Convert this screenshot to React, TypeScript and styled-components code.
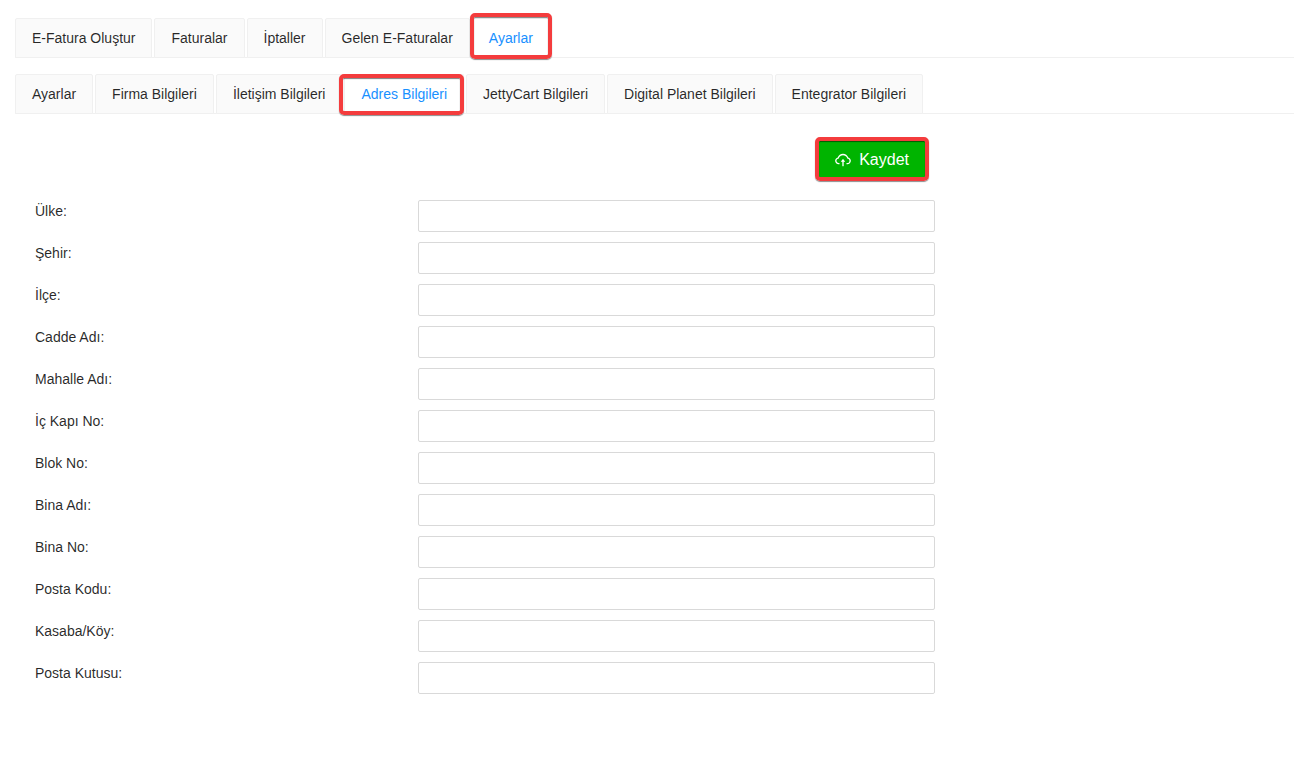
import React, { useState } from 'react';
import styled, { createGlobalStyle, css } from 'styled-components';
import { AiOutlineCloudUpload } from 'react-icons/ai';

const GlobalStyle = createGlobalStyle`
  *, *::before, *::after { box-sizing: border-box; }
  body {
    margin: 0;
    background: #fff;
    color: rgba(0, 0, 0, 0.85);
    font-family: "Liberation Sans", Arial, sans-serif;
    font-size: 14px;
    line-height: 22px;
  }
`;

const highlight = css`
  position: relative;
  &::after {
    content: '';
    position: absolute;
    z-index: 1;
    border: 4px solid #f43c3d;
    border-radius: 5px;
    box-shadow: 0 1px 1px rgba(0, 0, 0, 0.45), inset 0 1px 1px rgba(0, 0, 0, 0.5);
    pointer-events: none;
  }
`;

const Page = styled.main`
  padding: 18px 0 0 15px;
`;

const TabBar = styled.div`
  display: flex;
  gap: 2px;
  margin-bottom: 16px;
  box-shadow: inset 0 -1px #f0f0f0;
`;

const Tab = styled.button<{ $active?: boolean; $inset: string }>`
  height: 40px;
  padding: 0 16px;
  border: 1px solid #f0f0f0;
  border-radius: 2px 2px 0 0;
  background: #fafafa;
  color: inherit;
  font: inherit;
  white-space: nowrap;
  cursor: pointer;
  ${({ $active, $inset }) =>
    $active &&
    css`
      ${highlight}
      background: #fff;
      border-bottom-color: #fff;
      color: #1890ff;
      &::after { inset: ${$inset}; }
    `}
`;

const Form = styled.form`
  display: grid;
  grid-template-columns: 383fr 517fr 359fr;
  row-gap: 10px;
  padding: 10px 0 0 20px;
`;

const Actions = styled.div`
  grid-column: 2;
  display: flex;
  justify-content: flex-end;
  padding: 0 10px 10px 0;
`;

const SaveButton = styled.button`
  ${highlight}
  display: flex;
  align-items: center;
  gap: 7px;
  height: 40px;
  padding: 0 15px 0 14px;
  border: 1px solid #00b400;
  border-radius: 2px;
  background: #00b400;
  color: #fff;
  font: inherit;
  font-size: 16px;
  cursor: pointer;
  &::after { inset: -4px -5px -2px; }
`;

const Label = styled.label`
  grid-column: 1;
  justify-self: start;
  align-self: start;
`;

const TextInput = styled.input`
  grid-column: 2;
  width: 100%;
  min-width: 0;
  height: 32px;
  padding: 4px 11px;
  border: 1px solid #d9d9d9;
  border-radius: 2px;
  background: #fff;
  color: inherit;
  font: inherit;
`;

const mainTabs = ['E-Fatura Oluştur', 'Faturalar', 'İptaller', 'Gelen E-Faturalar', 'Ayarlar'];

const settingsTabs = [
  'Ayarlar',
  'Firma Bilgileri',
  'İletişim Bilgileri',
  'Adres Bilgileri',
  'JettyCart Bilgileri',
  'Digital Planet Bilgileri',
  'Entegrator Bilgileri',
];

const fields = [
  { id: 'ulke', label: 'Ülke:' },
  { id: 'sehir', label: 'Şehir:' },
  { id: 'ilce', label: 'İlçe:' },
  { id: 'cadde', label: 'Cadde Adı:' },
  { id: 'mahalle', label: 'Mahalle Adı:' },
  { id: 'ic-kapi', label: 'İç Kapı No:' },
  { id: 'blok', label: 'Blok No:' },
  { id: 'bina-adi', label: 'Bina Adı:' },
  { id: 'bina-no', label: 'Bina No:' },
  { id: 'posta-kodu', label: 'Posta Kodu:' },
  { id: 'kasaba', label: 'Kasaba/Köy:' },
  { id: 'posta-kutusu', label: 'Posta Kutusu:' },
];

interface TabsProps {
  items: string[];
  initial: string;
  inset: string;
}

function Tabs({ items, initial, inset }: TabsProps) {
  const [active, setActive] = useState(initial);
  return (
    <TabBar role="tablist">
      {items.map((item) => (
        <Tab
          key={item}
          type="button"
          role="tab"
          aria-selected={item === active}
          $active={item === active}
          $inset={inset}
          onClick={() => setActive(item)}
        >
          {item}
        </Tab>
      ))}
    </TabBar>
  );
}

export default function App() {
  return (
    <>
      <GlobalStyle />
      <Page>
        <Tabs items={mainTabs} initial="Ayarlar" inset="-6px -3px -2px" />
        <Tabs items={settingsTabs} initial="Adres Bilgileri" inset="-1px -1px -2px -6px" />
        <Form onSubmit={(event) => event.preventDefault()}>
          <Actions>
            <SaveButton type="submit">
              <AiOutlineCloudUpload size={18} aria-hidden />
              Kaydet
            </SaveButton>
          </Actions>
          {fields.map(({ id, label }) => (
            <React.Fragment key={id}>
              <Label htmlFor={id}>{label}</Label>
              <TextInput id={id} name={id} type="text" />
            </React.Fragment>
          ))}
        </Form>
      </Page>
    </>
  );
}
